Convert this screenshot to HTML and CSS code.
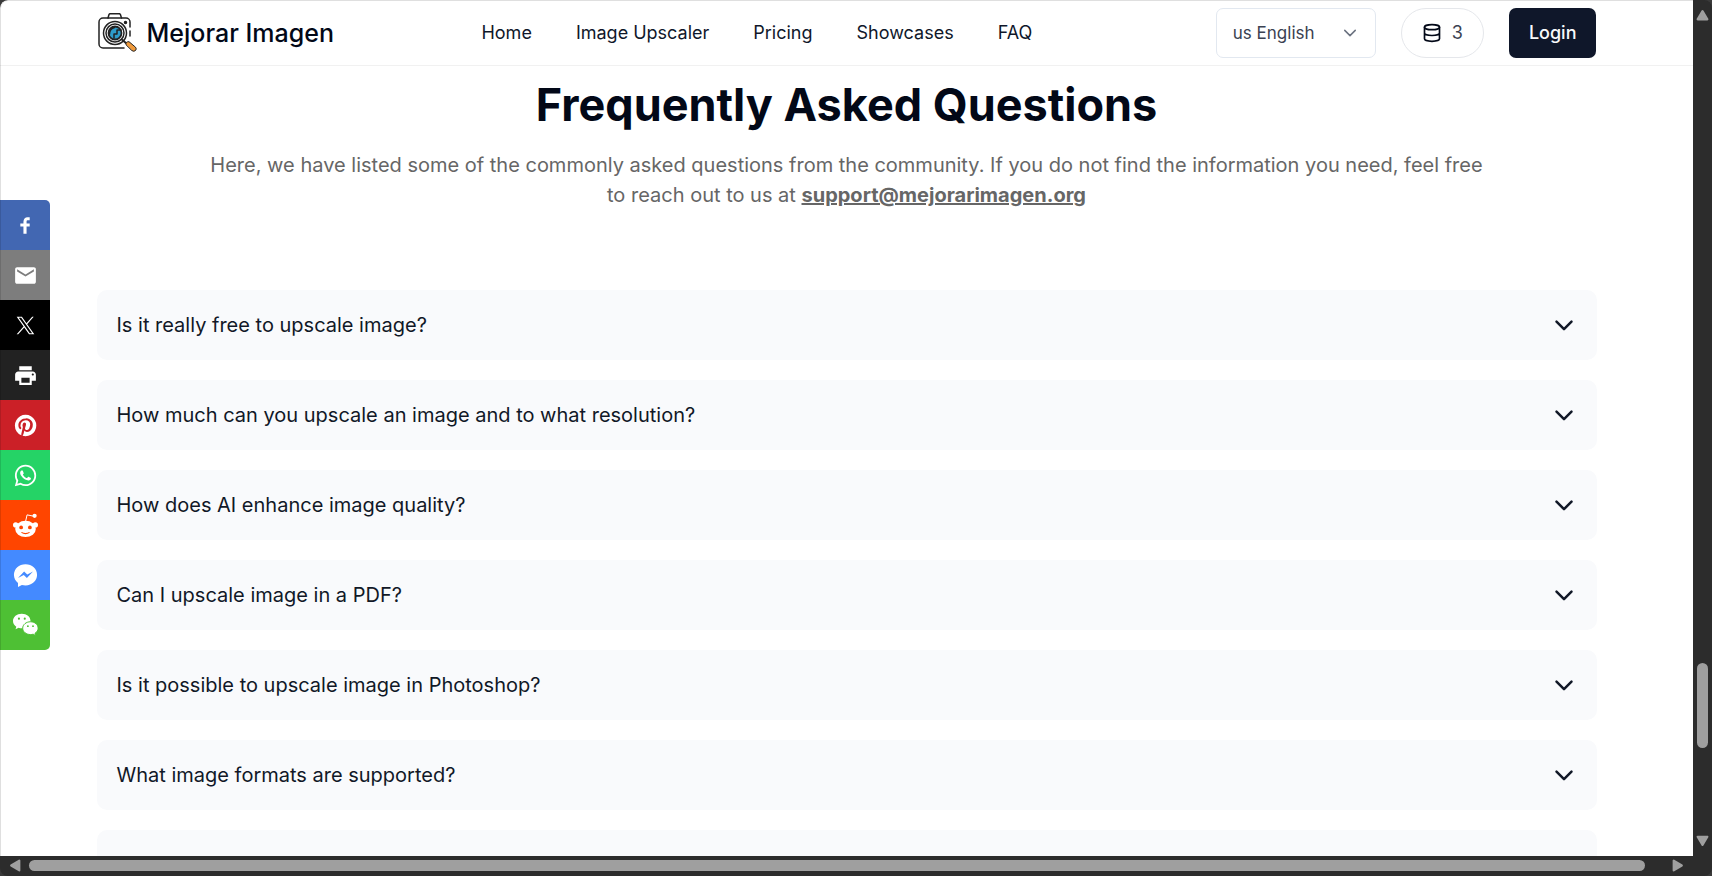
FILE: index.html
```html
<!DOCTYPE html>
<html lang="en">
<head>
  <meta charset="UTF-8" />
  <meta name="viewport" content="width=device-width, initial-scale=1" />
  <title>Mejorar Imagen - FAQ</title>
  <link rel="stylesheet" href="styles.css">
</head>
<body>
  <div class="window">
    <div class="page">
      <header class="header">
        <div class="container header-inner">
          <a class="logo" href="#home">
            <svg class="logo-icon" viewBox="-1 0 40 40" fill="none" stroke="#222" stroke-width="1.5" stroke-linecap="round" stroke-linejoin="round">
              <path d="M32 23v-5M32 14V9a4 4 0 0 0-4-4H5a4 4 0 0 0-4 4v22a4 4 0 0 0 4 4h21" />
              <path d="M10 5l1-3.500q.3-.8 1.200-.8h9q.9 0 1.200.8L23.500 5" />
              <circle cx="27.500" cy="9.500" r="1" fill="#222" />
              <circle cx="17" cy="20" r="11.500" />
              <circle cx="17" cy="20" r="9" fill="#fff" />
              <circle cx="17" cy="20" r="6.500" fill="#2d9cca" stroke-width="1.800" />
              <path d="M11.500 21q0-5 5-6.500M23 17h-4v4h-3v4" />
              <path d="M24.500 27l4 3.500" stroke-width="2" />
              <path d="M28 31.500q-.5-3 3-2.800l6.500 5.500q1.500 1.800 0 3.300t-3.300.3z" fill="#ef9a3c" stroke-width="1" />
            </svg>
            <span>Mejorar Imagen</span>
          </a>
          <nav class="nav">
            <a href="#home">Home</a>
            <a href="#upscaler">Image Upscaler</a>
            <a href="#pricing">Pricing</a>
            <a href="#showcases">Showcases</a>
            <a href="#faq">FAQ</a>
          </nav>
          <div class="actions">
            <div class="language">
              <select aria-label="Language">
                <option>us English</option>
              </select>
              <svg viewBox="0 0 24 24" class="icon-small"><path d="m5 8.500 7 7 7-7" /></svg>
            </div>
            <a class="credits" href="#pricing">
              <svg viewBox="0 0 24 24" class="icon"><ellipse cx="12" cy="5" rx="9" ry="3" /><path d="M3 5v14a9 3 0 0 0 18 0V5M3 12a9 3 0 0 0 18 0" /></svg>
              <span>3</span>
            </a>
            <button class="login" type="button">Login</button>
          </div>
        </div>
      </header>

      <main class="container" id="faq">
        <div class="intro">
          <h2>Frequently Asked Questions</h2>
          <p>Here, we have listed some of the commonly asked questions from the community. If you do not find the information you need, feel free to reach out to us at <a href="mailto:support@mejorarimagen.org">support@mejorarimagen.org</a></p>
        </div>
        <div class="faq-list">
          <button class="faq-item" type="button">
            <span>Is it really free to upscale image?</span>
            <svg viewBox="0 0 24 24" class="icon"><path d="m3 8 9 9 9-9" /></svg>
          </button>
          <button class="faq-item" type="button">
            <span>How much can you upscale an image and to what resolution?</span>
            <svg viewBox="0 0 24 24" class="icon"><path d="m3 8 9 9 9-9" /></svg>
          </button>
          <button class="faq-item" type="button">
            <span>How does AI enhance image quality?</span>
            <svg viewBox="0 0 24 24" class="icon"><path d="m3 8 9 9 9-9" /></svg>
          </button>
          <button class="faq-item" type="button">
            <span>Can I upscale image in a PDF?</span>
            <svg viewBox="0 0 24 24" class="icon"><path d="m3 8 9 9 9-9" /></svg>
          </button>
          <button class="faq-item" type="button">
            <span>Is it possible to upscale image in Photoshop?</span>
            <svg viewBox="0 0 24 24" class="icon"><path d="m3 8 9 9 9-9" /></svg>
          </button>
          <button class="faq-item" type="button">
            <span>What image formats are supported?</span>
            <svg viewBox="0 0 24 24" class="icon"><path d="m3 8 9 9 9-9" /></svg>
          </button>
          <div class="faq-item"></div>
        </div>
      </main>

      <div class="share">
        <button class="share-btn facebook" type="button" aria-label="Facebook">
          <svg viewBox="0 0 40 40"><path d="m21.700 16.700h5v5h-5v11.600h-5v-11.600h-5v-5h5v-2.100c0-2 0.600-4.500 1.800-5.900 1.300-1.300 2.800-2 4.700-2h3.500v5h-3.500c-0.900 0-1.500 0.600-1.500 1.500v3.500z" /></svg>
        </button>
        <button class="share-btn email" type="button" aria-label="Email">
          <svg viewBox="0 0 40 40"><path d="m33.400 13.400v-3.400l-13.400 8.400-13.400-8.400v3.400l13.400 8.200z m0-6.800q1.300 0 2.300 1.100t0.900 2.300v20q0 1.300-0.900 2.300t-2.300 1.100h-26.800q-1.300 0-2.300-1.100t-0.900-2.300v-20q0-1.300 0.900-2.300t2.300-1.100h26.800z" /></svg>
        </button>
        <button class="share-btn twitter" type="button" aria-label="X">
          <svg viewBox="-5 -5 34 34"><path d="M14.258 10.152L23.176 0h-2.113l-7.747 8.813L7.133 0H0l9.352 13.328L0 23.973h2.113l8.176-9.309 6.531 9.309h7.133zm-2.895 3.293l-.949-1.328L2.875 1.560h3.246l6.086 8.523.945 1.328 7.910 11.078h-3.246z" /></svg>
        </button>
        <button class="share-btn print" type="button" aria-label="Print">
          <svg viewBox="0 0 40 40"><path d="m30 5v6.600h-20v-6.600h20z m1.600 15c1 0 1.800-0.700 1.800-1.600s-0.800-1.800-1.800-1.800-1.600 0.800-1.600 1.800 0.700 1.600 1.600 1.600z m-5 11.600v-8.200h-13.200v8.200h13.200z m5-18.200c2.800 0 5 2.200 5 5v10h-6.600v6.600h-20v-6.600h-6.600v-10c0-2.800 2.200-5 5-5h23.200z" /></svg>
        </button>
        <button class="share-btn pinterest" type="button" aria-label="Pinterest">
          <svg viewBox="0 0 40 40"><path d="m37.300 20q0 4.700-2.300 8.600t-6.300 6.200-8.600 2.300q-2.400 0-4.800-0.700 1.300-2 1.700-3.600 0.200-0.800 1.200-4.700 0.500 0.800 1.700 1.500t2.500 0.600q2.700 0 4.800-1.500t3.300-4.200 1.200-6.100q0-2.500-1.400-4.700t-3.800-3.700-5.700-1.400q-2.400 0-4.400 0.700t-3.400 1.700-2.500 2.400-1.500 2.900-0.400 3q0 2.400 0.800 4.100t2.700 2.500q0.600 0.300 0.800-0.500 0.100-0.100 0.200-0.600t0.200-0.700q0.100-0.500-0.300-1-1.100-1.300-1.100-3.300 0-3.400 2.300-5.800t6.100-2.500q3.400 0 5.300 1.900t1.900 4.700q0 3.800-1.600 6.500t-3.900 2.600q-1.300 0-2.200-0.900t-0.500-2.400q0.200-0.800 0.600-2.100t0.700-2.300 0.200-1.600q0-1.200-0.600-1.900t-1.700-0.700q-1.400 0-2.300 1.200t-1 3.200q0 1.600 0.600 2.700l-2.200 9.400q-0.400 1.500-0.300 3.900-4.600-2-7.500-6.300t-2.800-9.400q0-4.700 2.300-8.600t6.200-6.200 8.600-2.300 8.600 2.300 6.300 6.200 2.300 8.600z" /></svg>
        </button>
        <button class="share-btn whatsapp" type="button" aria-label="WhatsApp">
          <svg viewBox="-2 -2 28 28"><path d="M17.472 14.382c-.297-.149-1.758-.867-2.030-.967-.273-.099-.471-.148-.670.150-.197.297-.767.966-.940 1.164-.173.199-.347.223-.644.075-.297-.150-1.255-.463-2.390-1.475-.883-.788-1.480-1.761-1.653-2.059-.173-.297-.018-.458.130-.606.134-.133.298-.347.446-.520.149-.174.198-.298.298-.497.099-.198.050-.371-.025-.520-.075-.149-.669-1.612-.916-2.207-.242-.579-.487-.500-.669-.510-.173-.008-.371-.010-.570-.010-.198 0-.520.074-.792.372-.272.297-1.040 1.016-1.040 2.479 0 1.462 1.065 2.875 1.213 3.074.149.198 2.096 3.200 5.077 4.487.709.306 1.262.489 1.694.625.712.227 1.360.195 1.871.118.571-.085 1.758-.719 2.006-1.413.248-.694.248-1.289.173-1.413-.074-.124-.272-.198-.570-.347m-5.421 7.403h-.004a9.870 9.870 0 0 1-5.031-1.378l-.361-.214-3.741.982.998-3.648-.235-.374a9.860 9.860 0 0 1-1.510-5.260c.001-5.450 4.436-9.884 9.888-9.884 2.640 0 5.122 1.030 6.988 2.898a9.825 9.825 0 0 1 2.893 6.994c-.003 5.450-4.437 9.884-9.885 9.884m8.413-18.297A11.815 11.815 0 0 0 12.050 0C5.495 0 .160 5.335.157 11.892c0 2.096.547 4.142 1.588 5.945L.057 24l6.305-1.654a11.882 11.882 0 0 0 5.683 1.448h.005c6.554 0 11.890-5.335 11.893-11.893a11.821 11.821 0 0 0-3.480-8.413z" /></svg>
        </button>
        <button class="share-btn reddit" type="button" aria-label="Reddit">
          <svg viewBox="0 0 40 40">
            <path d="M20 14l2.500-11 10 2" fill="none" stroke="#fff" stroke-width="1.600" />
            <circle cx="34.500" cy="4.500" r="3.400" />
            <circle cx="4.300" cy="19" r="4.300" /><circle cx="35.700" cy="19" r="4.300" />
            <ellipse cx="20" cy="25.500" rx="16.500" ry="13" />
            <g fill="#ff4500"><circle cx="13" cy="23" r="3" /><circle cx="27" cy="23" r="3" /></g>
            <path d="M13.500 31q6.500 4 13 0" fill="none" stroke="#ff4500" stroke-width="1.800" />
          </svg>
        </button>
        <button class="share-btn messenger" type="button" aria-label="Messenger">
          <svg viewBox="0 0 40 40"><path d="M20 2C9.500 2 1.500 9.500 1.500 18.800c0 5.500 2.500 10 6.500 13V38.500l6.200-3.500c1.800.5 3.800.8 5.800.8 10.500 0 18.500-7.500 18.500-17S30.500 2 20 2z" /><path d="M8 24l9.800-10.500 5 5 9.200-5-9.800 10.500-5-5z" fill="#448aff" /></svg>
        </button>
        <button class="share-btn wechat" type="button" aria-label="WeChat">
          <svg viewBox="0 0 40 40">
            <path d="M14 1C6 1 0 6 0 12.800c0 4 2 7 5.300 9.200L4 26l5-2.500q2.500.8 5 .8c8 0 14-5 14-11.700S22 1 14 1z" />
            <path d="M28 14c-7 0-12.500 4.700-12.500 10.300S21 34.500 28 34.500q2.200 0 4.200-.6l4 2.200-1-3.600c3-2 5-4.700 5-8.200C40.200 18.700 35 14 28 14z" stroke="#4ec034" stroke-width="1.600" />
            <g fill="#4ec034"><circle cx="9.500" cy="9" r="1.700" /><circle cx="18.800" cy="9" r="1.700" /><circle cx="23.800" cy="21" r="1.500" /><circle cx="32" cy="21" r="1.500" /></g>
          </svg>
        </button>
      </div>
    </div>

    <div class="scroll scroll-y" aria-hidden="true">
      <svg viewBox="0 0 12 12"><path d="M6 2l4.500 7.500h-9z" /></svg>
      <div class="track"><div class="thumb"></div></div>
      <svg viewBox="0 0 12 12"><path d="M6 10l4.500-7.500h-9z" /></svg>
    </div>
    <div class="scroll scroll-x" aria-hidden="true">
      <svg viewBox="0 0 12 12"><path d="M2 6l7.500-4.500v9z" /></svg>
      <div class="track"><div class="thumb"></div></div>
      <svg viewBox="0 0 12 12"><path d="M10 6L2.500 1.500v9z" /></svg>
    </div>
  </div>
</body>
</html>
```
FILE: styles.css
```css
*, *::before, *::after {
  box-sizing: border-box;
}
body {
  margin: 0;
  font-family: Inter, 'Liberation Sans', sans-serif;
  font-size: 20px;
  line-height: 30px;
  color: #020817;
  background: #3a3a3a;
}
a {
  color: inherit;
  text-decoration: none;
}
button {
  font: inherit;
  color: inherit;
  border: none;
  cursor: pointer;
}
.window {
  display: grid;
  grid-template-columns: minmax(0, 1fr) 19px;
  grid-template-rows: minmax(0, 1fr) 20px;
  height: 100vh;
  background: #2c2c2c;
  border-radius: 8px;
  overflow: hidden;
}
.page {
  position: relative;
  overflow: hidden;
  background: #fff;
  border-top-left-radius: 8px;
}
/* thin window edge, drawn over the page */
.page::after {
  content: "";
  position: absolute;
  inset: 0;
  border-top: 1px solid rgba(0,0,0,0.12);
  border-left: 1px solid rgba(0,0,0,0.12);
  border-top-left-radius: 8px;
  pointer-events: none;
}
.container {
  max-width: 1500px;
  margin: 0 auto;
}

/* header */
.header {
  border-bottom: 1px solid #f1f1f1;
}
.header-inner {
  display: flex;
  align-items: center;
  justify-content: space-between;
  height: 65px;
  font-size: 18px;
}
.logo {
  display: flex;
  align-items: center;
  gap: 10px;
  font-size: 25px;
  font-weight: 500;
}
.logo-icon {
  width: 40px;
  height: 40px;
}
.nav {
  display: flex;
  gap: 44px;
  padding-right: 36px;
  color: #0f172a;
}
.actions {
  display: flex;
  gap: 25px;
}
.language {
  position: relative;
  width: 160px;
}
.language select {
  width: 100%;
  height: 50px;
  padding: 0 16px;
  font-family: inherit;
  font-size: 17px;
  color: #3b4252;
  background: #fff;
  border: 1px solid #e2e8f0;
  border-radius: 7px;
  appearance: none;
}
.icon, .icon-small {
  width: 20px;
  height: 20px;
  fill: none;
  stroke: currentColor;
  stroke-width: 2;
  stroke-linecap: round;
  stroke-linejoin: round;
}
.icon-small {
  position: absolute;
  top: 16px;
  right: 17px;
  width: 18px;
  height: 18px;
  color: #6b7280;
  pointer-events: none;
}
.credits {
  display: flex;
  align-items: center;
  gap: 10px;
  height: 50px;
  padding: 0 20px;
  color: #020817;
  border: 1px solid #e5e7eb;
  border-radius: 25px;
}
.credits span {
  color: #3b4252;
}
.login {
  height: 50px;
  padding: 0 20px;
  font-weight: 500;
  color: #f8fafc;
  background: #0f172a;
  border-radius: 7px;
}

/* faq */
.intro {
  padding: 14px 112px 80px;
  text-align: center;
}
.intro h2 {
  margin: 0 0 20px;
  font-size: 45px;
  line-height: 50px;
  font-weight: 700;
}
.intro p {
  margin: 0;
  color: #666;
}
.intro p a {
  font-weight: 700;
  text-decoration: underline;
}
.faq-list {
  display: flex;
  flex-direction: column;
  gap: 20px;
}
.faq-item {
  display: flex;
  align-items: center;
  justify-content: space-between;
  min-height: 70px;
  padding: 20px;
  padding-right: 23px;
  text-align: left;
  color: #111827;
  background: #f9fafc;
  border-radius: 10px;
}
.faq-item .icon {
  stroke-width: 3;
}

/* share bar */
.share {
  position: absolute;
  top: 200px;
  left: 0;
  display: flex;
  flex-direction: column;
  border-radius: 0 5px 5px 0;
  overflow: hidden;
}
.share-btn {
  display: flex;
  align-items: center;
  justify-content: center;
  width: 50px;
  height: 50px;
  padding: 0;
}
.share-btn svg {
  width: 25px;
  height: 25px;
  fill: #fff;
}
.facebook {
  background: #4267b2;
}
.email {
  background: #7d7d7d;
}
.twitter {
  background: #000;
}
.print {
  background: #222;
}
.pinterest {
  background: #cb2027;
}
.whatsapp {
  background: #25d366;
}
.reddit {
  background: #ff4500;
}
.messenger {
  background: #448aff;
}
.wechat {
  background: #4ec034;
}

/* scrollbars */
.scroll {
  display: flex;
  align-items: center;
}
.scroll svg {
  width: 13px;
  height: 13px;
  fill: #9f9f9f;
  stroke: #9f9f9f;
  stroke-width: 2;
  stroke-linejoin: round;
}
.track {
  display: flex;
  flex: 1;
}
.thumb {
  background: #9f9f9f;
  border-radius: 6px;
}
.scroll-y {
  flex-direction: column;
  padding: 9px 0;
}
.scroll-y .track {
  flex-direction: column;
  padding-top: 641px;
  padding-bottom: 86px;
}
.scroll-y .thumb {
  flex: 1;
  width: 11px;
}
.scroll-x {
  padding: 0 9px 1px;
}
.scroll-x .track {
  padding: 0 26px 0 7px;
}
.scroll-x .thumb {
  flex: 1;
  height: 11px;
}
```
